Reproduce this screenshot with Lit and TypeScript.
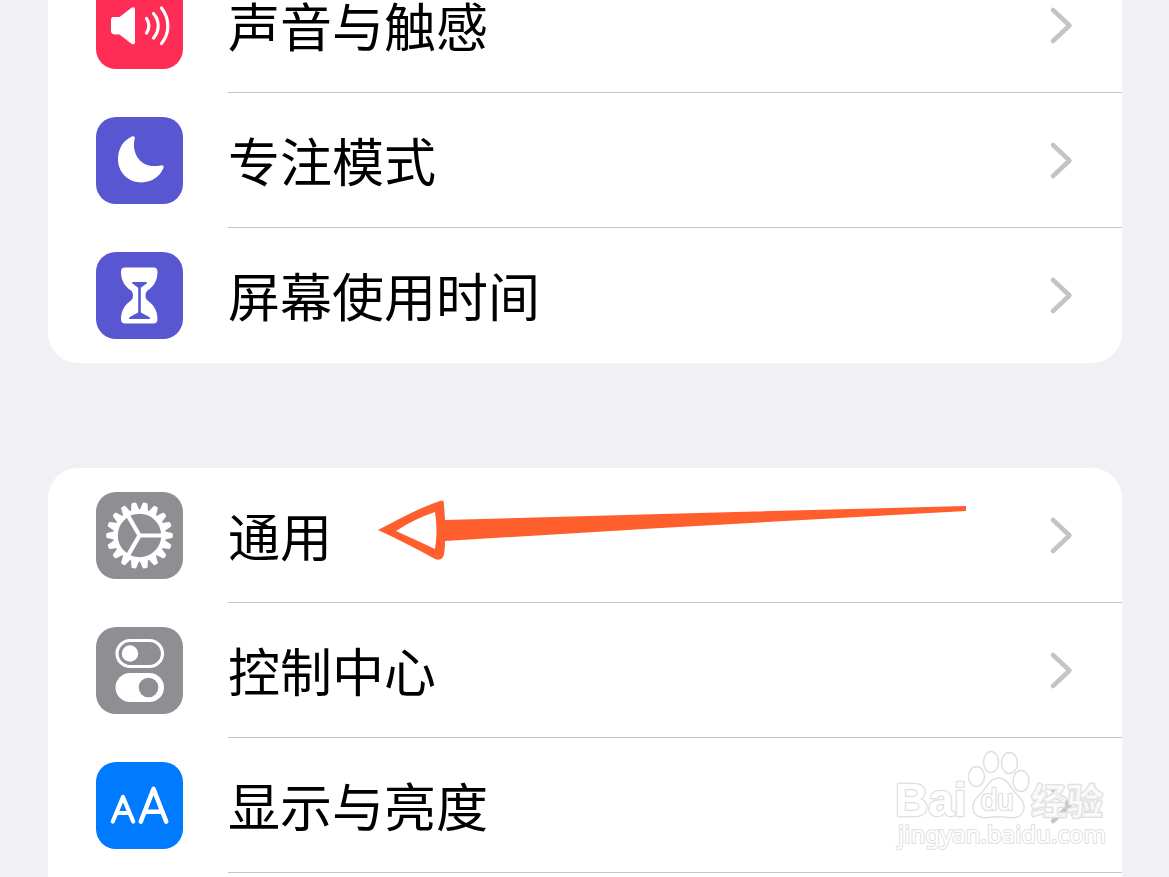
import { LitElement, html, svg, css } from "lit";
import { customElement, property } from "lit/decorators.js";

const GEAR_TEETH = 18;

const glyphs: Record<string, unknown> = {
  sound: svg`
    <path fill="#fff" d="M17 35h6.500L35.500 25.800c1.700-1.300 3.500-.6 3.500 1.500v32.900c0 2.100-1.800 2.800-3.500 1.500L23.500 52.500H19c-2.600 0-4-1.300-4-3.800V38.600c0-2.400.6-3.600 2-3.600z"/>
    <g fill="none" stroke="#fff" stroke-width="3.200" stroke-linecap="round">
      <path d="M50.500 36.500c3.200 4.200 3.200 10.300 0 14.500"/>
      <path d="M57.500 31.500c6.300 7.400 6.300 17.300 0 24.600"/>
      <path d="M65.500 26c8.500 11 8.500 25 0 35.500"/>
    </g>`,
  moon: svg`
    <path fill="#fff" d="M35.800 19.600c1.800-.9 3.500.1 3 2-1.200 4.400-1.400 9.500.6 14.600 4 10 13 14.800 25.300 12.200 2.300-.5 3.600.8 2.700 2.900C63.500 60 55.500 65.400 45.500 65.400c-13.400 0-23.500-10.200-23.500-23.200 0-10.400 5.300-18.700 13.800-22.600z"/>`,
  hourglass: svg`
    <path fill="#fff" d="M29 15.500h28.500c2.800 0 4 1.500 4 4.200 0 9.500-4.500 14.800-9.300 18.300-1.700 1.300-2.700 3-2.700 5.500s1 4.200 2.700 5.500c4.800 3.500 9.300 8.800 9.300 18.300 0 2.700-1.200 4.200-4 4.200H29c-2.800 0-4-1.500-4-4.200 0-9.500 4.500-14.800 9.300-18.300 1.700-1.300 2.700-3 2.700-5.500s-1-4.200-2.700-5.500C29.500 34.500 25 29.200 25 19.700c0-2.700 1.200-4.200 4-4.200z"/>
    <path fill="#5856d0" d="M37 30h13c1 0 1.300.8.600 1.500l-5.800 4.300v24.700l8 4.200c1.500.8 1.800 2.300.5 2.300H33.700c-1.300 0-1-1.500.5-2.300l8-4.200V35.800l-5.800-4.300C35.700 30.800 36 30 37 30z"/>`,
  gear: svg`
    <g fill="none" stroke="#fff">
      <circle cx="43.500" cy="43.500" r="24" stroke-width="4.600"/>
      <path stroke-width="4.200" d="M43.500 43.500H67M43.500 43.500 31.700 23.100M43.500 43.500 31.700 63.900"/>
    </g>
    ${Array.from({ length: GEAR_TEETH }, (_, i) => svg`
      <path fill="#fff" d="M68.500 39.300 75.800 41q1 .3 1 1.200v2.600q0 .9-1 1.200l-7.300 1.700z"
        transform=${`rotate(${(i * 360) / GEAR_TEETH} 43.500 43.500)`}/>`)}`,
  toggles: svg`
    <rect x="21" y="13.500" width="45.500" height="26" rx="13" fill="none" stroke="#fff" stroke-width="3.200"/>
    <circle cx="34" cy="26.500" r="8.200" fill="#fff"/>
    <rect x="19.500" y="46" width="48.500" height="29" rx="14.500" fill="#fff"/>
    <circle cx="52.500" cy="60.500" r="9.800" fill="#8e8e93"/>`,
  letters: svg`
    <g fill="none" stroke="#fff" stroke-linecap="round" stroke-linejoin="round">
      <path stroke-width="4.200" d="M16.800 59.500 27 35 37.200 59.500M20.500 51h13"/>
      <path stroke-width="4.600" d="M44.800 59.500 57.500 27 70.200 59.500M49 49.800h17"/>
    </g>`,
};

@customElement("settings-row")
class SettingsRow extends LitElement {
  @property() label = "";
  @property() icon = "";
  @property() tint = "";

  static styles = css`
    :host {
      display: block;
    }
    .row {
      display: flex;
      align-items: center;
      gap: 45px;
      height: 135px;
      padding-left: 48px;
      color: #000;
      text-decoration: none;
    }
    .tile {
      flex: none;
      width: 87px;
      height: 87px;
      border-radius: 20px;
    }
    .red { background: #ff2d55; }
    .indigo { background: #5856d0; }
    .gray { background: #8e8e93; }
    .blue { background: #007aff; }
    .tile svg {
      display: block;
      width: 100%;
      height: 100%;
    }
    .body {
      flex: 1;
      align-self: stretch;
      display: flex;
      align-items: center;
      justify-content: space-between;
      padding-right: 48px;
      border-bottom: 1px solid #c6c6c8;
    }
    :host([last]) .body {
      border-bottom-color: transparent;
    }
    .label {
      font-size: 52px;
      line-height: 76px;
      white-space: nowrap;
    }
    .chevron {
      flex: none;
      width: 26px;
      height: 42px;
    }
  `;

  render() {
    return html`
      <a class="row" href="#">
        <span class="tile ${this.tint}">
          <svg viewBox="0 0 87 87" aria-hidden="true">${glyphs[this.icon]}</svg>
        </span>
        <span class="body">
          <span class="label">${this.label}</span>
          <svg class="chevron" viewBox="0 0 26 42" aria-hidden="true">
            <path d="M5 6 21.500 21.500 5 37" fill="none" stroke="#c4c4c6" stroke-width="4.500" stroke-linecap="round" stroke-linejoin="round"/>
          </svg>
        </span>
      </a>
    `;
  }
}

@customElement("app-root")
class AppRoot extends LitElement {
  static styles = css`
    :host {
      display: block;
      font-family: "Noto Sans CJK SC", sans-serif;
    }
    .page {
      position: relative;
      box-sizing: border-box;
      height: 100vh;
      overflow: hidden;
      display: flex;
      flex-direction: column;
      gap: 105px;
      padding: 0 47px 0 48px;
      background: #f1f0f5;
    }
    .card {
      background: #fff;
      border-radius: 30px;
    }
    .scrolled {
      margin-top: -42px;
    }
    .open {
      flex: 1 0 auto;
      border-radius: 30px 30px 0 0;
    }
    .marked {
      position: relative;
    }
    .arrow {
      position: absolute;
      left: 328px;
      top: 27px;
      width: 596px;
      height: 70px;
      pointer-events: none;
    }
    .watermark {
      position: absolute;
      right: 59px;
      bottom: 17px;
      width: 220px;
      height: 115px;
      overflow: visible;
      pointer-events: none;
    }
    .watermark text {
      paint-order: stroke;
    }
    .brand { font: bold 46px "Liberation Sans", sans-serif; }
    .du { font: 29px "Liberation Sans", sans-serif; }
    .cjk { font: bold 36px "Noto Sans CJK SC", sans-serif; }
    .site { font: 24px "Noto Sans", sans-serif; }
  `;

  render() {
    return html`
      <main class="page">
        <section class="card scrolled">
          <settings-row label="声音与触感" icon="sound" tint="red"></settings-row>
          <settings-row label="专注模式" icon="moon" tint="indigo"></settings-row>
          <settings-row label="屏幕使用时间" icon="hourglass" tint="indigo" last></settings-row>
        </section>
        <section class="card open">
          <div class="marked">
            <settings-row label="通用" icon="gear" tint="gray"></settings-row>
            <svg class="arrow" viewBox="0 0 596 70" aria-hidden="true">
              <path fill="#ff5f2d" fill-rule="evenodd" d="M2 35C23 24 43 13 64 6Q68 4 68 9L69 25 285 19 590 11V16L285 33 69 46Q69 58 67 62 65 66 59 64C41 54 22 44 2 35zM20 36Q40 45 59 54 62 36 59 17 38 24 20 36z"/>
            </svg>
          </div>
          <settings-row label="控制中心" icon="toggles" tint="gray"></settings-row>
          <settings-row label="显示与亮度" icon="letters" tint="blue"></settings-row>
        </section>
        <svg class="watermark" viewBox="0 0 220 115" aria-label="Baidu 经验">
          <g fill="#fff" stroke="#e0e0e0" stroke-width="2.500" stroke-linejoin="round">
            <text class="brand" x="5" y="71">Bai</text>
            <g stroke-width="1.500">
              <ellipse cx="86.500" cy="31.500" rx="8" ry="10"/>
              <ellipse cx="101" cy="17" rx="7.500" ry="10.500"/>
              <ellipse cx="119.500" cy="18" rx="8" ry="10.500"/>
              <ellipse cx="131" cy="36" rx="8" ry="10.500"/>
              <path d="M108.500 33C99 33 97 43 91 48.500 85 54 82 58 83 64 84 71 91 73.500 98 72.500c8-1.200 13-1.200 21 0 8 1 14-2 15-9 .8-6-3-10-8-15-6-6-8-15.500-17.500-15.500z"/>
            </g>
            <text class="du" x="91" y="65">du</text>
            <text class="cjk" x="141" y="70" fill-opacity=".7">经验</text>
            <text class="site" x="8" y="98" stroke-width="2">jingyan.baidu.com</text>
          </g>
        </svg>
      </main>
    `;
  }
}
